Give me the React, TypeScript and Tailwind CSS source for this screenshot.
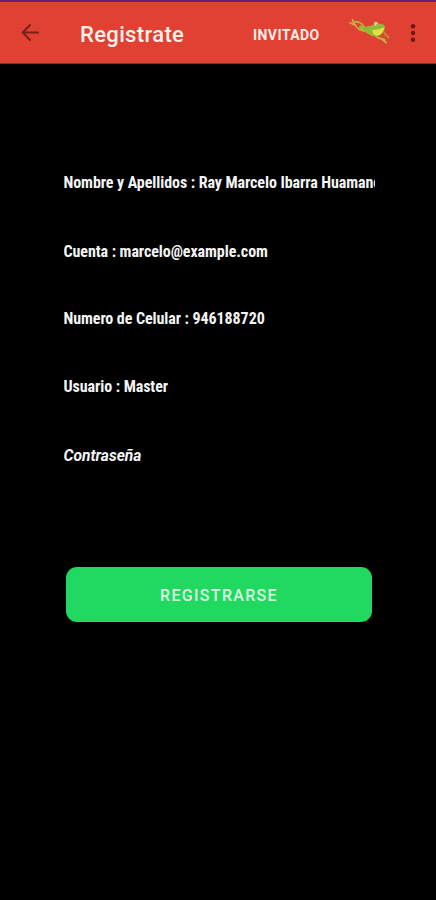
import { clsx } from 'clsx'

const FIELDS = [
  { id: 'nombre', value: 'Nombre y Apellidos : Ray Marcelo Ibarra Huamanc', row: 'h-[69px]' },
  { id: 'cuenta', value: 'Cuenta : marcelo@example.com', row: 'h-[67px]' },
  { id: 'celular', value: 'Numero de Celular : 946188720', row: 'h-[68px]' },
  { id: 'usuario', value: 'Usuario : Master', row: 'h-[69px]' },
  { id: 'clave', value: 'Contraseña', row: 'h-6', italic: true },
]

function FrogLogo() {
  return (
    <svg className="h-[27px] w-[42px]" viewBox="0 0 42 27" fill="none" strokeLinecap="round" strokeLinejoin="round">
      {/* back legs */}
      <path d="M17 13.5 L11 11.5 L7.5 7.5 L2 4.8 M7.5 7.5 L5 3.5 L4.5 1.5" stroke="#d0a844" strokeWidth="1.7" />
      <path d="M17 10.5 L14 6 L10.5 4 L6 4" stroke="#b5ab3e" strokeWidth="2" />
      <path d="M19 12.5 L13 9.5" stroke="#9cbd38" strokeWidth="4" />
      {/* front legs */}
      <path d="M26 16.5 L30.5 20 L36.5 21.8 M34 21 L38 24.5" stroke="#b9b340" strokeWidth="2.2" />
      <path d="M35 13 L37 16 L40.5 19.5" stroke="#bd8b36" strokeWidth="1.8" />
      <path d="M14 8.5 C18 9.5 22 8 26 6.5 C31 5 37 6 37 9 C36.5 13.5 33 18.5 28 18.5 C22 18 17 15 14 8.5 Z" fill="#8fba35" />
      <path d="M24.5 12 C28.5 12 33 10.5 36.3 9.2 C35.5 14 32.5 17.5 28.5 17.5 C26 17 24 14.5 24.5 12 Z" fill="#e3df46" />
      <circle cx="28" cy="5.8" r="2.1" fill="#e0c8a0" />
      <circle cx="28.9" cy="6.8" r="0.7" fill="#a78a43" />
    </svg>
  )
}

function AppBar() {
  return (
    <header className="flex h-[62px] items-center border-b border-[#8d2a20] bg-[#e04132]">
      <button aria-label="Volver" className="ml-[18px] flex size-6 items-center justify-center pb-[2px]">
        <svg className="size-6" viewBox="0 0 24 24" fill="none" stroke="#76211a" strokeWidth="2">
          <path d="M21 12.5 H5 M12.5 4.5 L4.7 12.5 L12.5 20.5" />
        </svg>
      </button>
      <h1 className="ml-[38px] w-[173px] pt-[4px] text-[22px] leading-7 font-medium tracking-[0.35px] text-[#fff0e9]">Registrate</h1>
      <span className="w-[95px] pt-[5px] text-sm font-bold tracking-[0.45px] text-[#ffece6]">INVITADO</span>
      <div className="w-[56px] pb-[2px]"><FrogLogo /></div>
      <button aria-label="Más opciones">
        <svg className="h-6 w-4" viewBox="0 0 16 24" fill="#6b1711">
          <circle cx="9" cy="5.2" r="2.2" />
          <circle cx="9" cy="12" r="2.2" />
          <circle cx="9" cy="18.8" r="2.2" />
        </svg>
      </button>
    </header>
  )
}

export default function App() {
  return (
    <div className="h-[900px] w-full overflow-hidden bg-black font-['Roboto',sans-serif]">
      <div className="h-[2px] bg-[#62207f]" />
      <AppBar />
      <main className="flex flex-col pt-[107px] pl-[63.5px]">
        {FIELDS.map(f => (
          <div key={f.id} className={clsx('w-[311.5px] overflow-hidden', f.row)}>
            <span
              className={clsx(
                'block leading-6 font-bold whitespace-nowrap text-[#f4f4f4]',
                f.italic ? 'text-[15.6px] italic' : 'text-base tracking-[-0.07px] [font-stretch:75%]',
              )}
            >
              {f.value}
            </span>
          </div>
        ))}
        <button className="mt-[99px] ml-[2.5px] h-[55px] w-[306px] rounded-[11px] bg-[#21d960] pt-[2px] text-base font-medium tracking-[1.3px] text-[#d8fbe0]">
          REGISTRARSE
        </button>
      </main>
    </div>
  )
}
